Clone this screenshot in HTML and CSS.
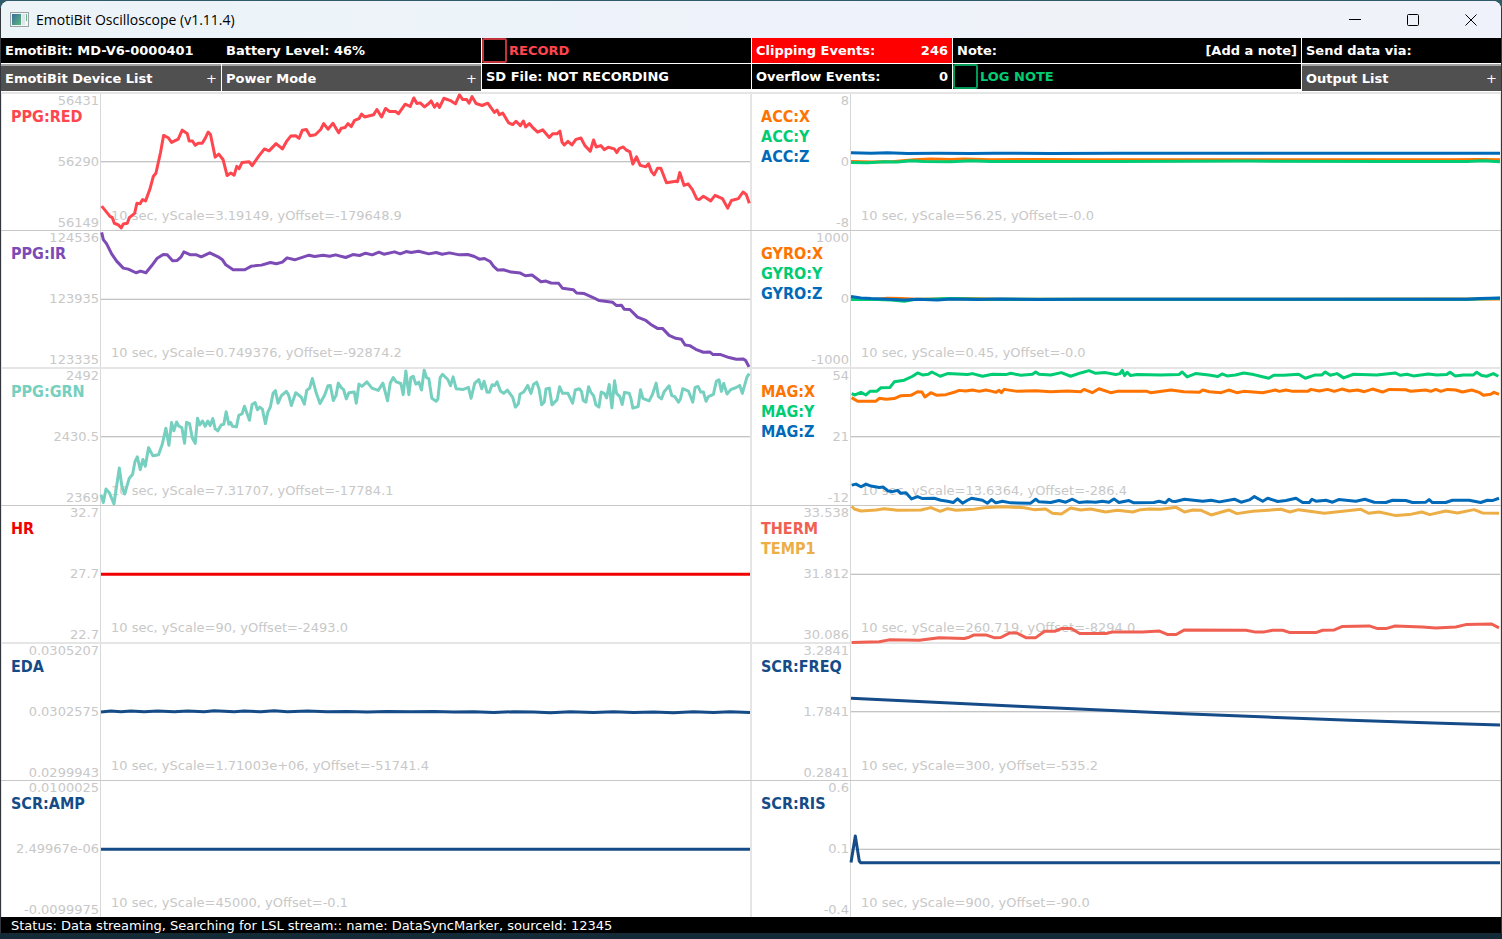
FILE: index.html
```
<!DOCTYPE html>
<html lang="en">
<head>
    <meta charset="UTF-8">
    <meta name="viewport" content="width=device-width, initial-scale=1.0">
    <title>EmotiBit Oscilloscope (v1.11.4)</title>
    <link rel="stylesheet" href="styles.css">
</head>
<body>
    <div class="window">
        <div class="titlebar">
            <svg class="app-icon" viewBox="0 0 19 15" aria-hidden="true">
                <defs>
                    <linearGradient id="icon-fill" x1="0" y1="0" x2="1" y2="1">
                        <stop offset="0" stop-color="#3a6ea0"/>
                        <stop offset="1" stop-color="#5cb87a"/>
                    </linearGradient>
                </defs>
                <rect x="0.5" y="0.5" width="18" height="14" fill="#f4f6f6" stroke="#9aa3a8"/>
                <rect x="2" y="2" width="9" height="11" fill="url(#icon-fill)"/>
                <rect x="12" y="2" width="3" height="11" fill="#dfe6e8"/>
                <rect x="16" y="2" width="1" height="7" fill="#69b58a"/>
            </svg>
            <h1 class="title">EmotiBit Oscilloscope (v1.11.4)</h1>
            <div class="window-controls">
                <button type="button" class="window-btn" aria-label="Minimize">
                    <svg viewBox="0 0 12 12"><path d="M0 5.5H12"/></svg>
                </button>
                <button type="button" class="window-btn" aria-label="Maximize">
                    <svg viewBox="0 0 12 12"><rect x="0.5" y="0.5" width="11" height="11" rx="1"/></svg>
                </button>
                <button type="button" class="window-btn" aria-label="Close">
                    <svg viewBox="0 0 12 12"><path d="M0.5 0.5L11.5 11.5M11.5 0.5L0.5 11.5"/></svg>
                </button>
            </div>
        </div>

        <!-- Device and recording controls -->
        <div class="toolbar">
            <div class="tool-group">
                <div class="tool-pair cell">
                    <span class="pair-text">EmotiBit: MD-V6-0000401</span>
                    <span class="pair-text">Battery Level: 46%</span>
                </div>
                <div class="tool-pair">
                    <button type="button" class="drop-btn"><span>EmotiBit Device List</span><span class="plus">+</span></button>
                    <button type="button" class="drop-btn"><span>Power Mode</span><span class="plus">+</span></button>
                </div>
            </div>
            <div class="tool-group">
                <label class="cell toggle record"><input type="checkbox">RECORD</label>
                <div class="cell">SD File: NOT RECORDING</div>
            </div>
            <div class="tool-group">
                <div class="cell alert"><span>Clipping Events:</span><span>246</span></div>
                <div class="cell"><span>Overflow Events:</span><span>0</span></div>
            </div>
            <div class="tool-group">
                <div class="cell"><span>Note:</span><button type="button" class="note-btn">[Add a note]</button></div>
                <label class="cell toggle log"><input type="checkbox">LOG NOTE</label>
            </div>
            <div class="tool-group">
                <div class="cell">Send data via:</div>
                <button type="button" class="drop-btn"><span>Output List</span><span class="plus">+</span></button>
            </div>
        </div>

        <!-- Signal plots -->
        <main class="plots">
            <section class="panel">
                <div class="axis">
                    <div class="names"><span class="ppg-red">PPG:RED</span></div>
                    <div class="ticks"><span>56431</span><span>56290</span><span>56149</span></div>
                </div>
                <div class="plot">
                    <p class="info">10 sec, yScale=3.19149, yOffset=-179648.9</p>
                    <svg class="trace" viewBox="0 0 1950 412" preserveAspectRatio="none">
                        <line class="zero" x1="0" y1="206" x2="1950" y2="206"/>
                        <polyline class="ppg-red" points="2,341 15,357 27,372 34,376 40,393 52,398 61,407 67,395 79,393 85,376 101,363 108,332 117,334 125,321 134,325 147,289 157,251 165,241 179,177 188,126 202,133 212,147 232,137 244,110 259,120 265,143 275,143 283,156 292,150 304,150 313,135 322,116 329,123 343,192 354,183 367,200 379,248 390,240 400,247 408,220 415,227 424,208 445,206 454,218 474,189 491,167 505,173 526,151 545,167 557,145 570,128 585,127 595,135 605,110 617,108 628,127 644,124 660,108 669,90 682,107 697,89 714,118 722,104 733,102 742,90 752,99 762,80 775,75 783,61 792,70 819,63 829,47 843,70 855,44 867,53 885,53 894,60 914,31 929,38 940,12 949,29 959,27 972,39 985,29 992,21 1002,40 1010,29 1017,41 1030,13 1052,21 1065,30 1077,3 1087,17 1099,17 1106,28 1115,8 1127,29 1145,35 1162,28 1182,56 1190,49 1197,63 1207,58 1225,88 1237,93 1247,83 1260,96 1269,82 1276,100 1287,90 1299,104 1312,116 1327,109 1347,132 1357,121 1370,121 1379,113 1385,146 1392,155 1403,144 1415,155 1427,138 1442,134 1454,157 1470,174 1480,140 1488,161 1502,157 1512,169 1524,162 1542,167 1550,178 1557,166 1569,161 1579,171 1589,175 1598,213 1609,191 1620,217 1637,221 1645,212 1654,236 1662,246 1672,226 1682,226 1699,270 1727,265 1732,267 1739,239 1752,278 1764,273 1777,291 1790,319 1797,321 1810,311 1832,325 1845,308 1867,318 1883,347 1894,324 1915,318 1929,298 1939,306 1948,332"/>
                    </svg>
                </div>
            </section>

            <section class="panel">
                <div class="axis">
                    <div class="names"><span class="axis-x">ACC:X</span><span class="axis-y">ACC:Y</span><span class="axis-z">ACC:Z</span></div>
                    <div class="ticks"><span>8</span><span>0</span><span>-8</span></div>
                </div>
                <div class="plot">
                    <p class="info">10 sec, yScale=56.25, yOffset=-0.0</p>
                    <svg class="trace" viewBox="0 0 1950 412" preserveAspectRatio="none">
                        <line class="zero" x1="0" y1="206" x2="1950" y2="206"/>
                        <polyline class="axis-x" points="0,205 60,207 130,205 190,200 240,198 300,199 340,198 420,200 560,199 700,200 900,200 1200,200 1500,200 1800,200 1890,199 1950,200"/>
                        <polyline class="axis-y" points="0,208 50,209 100,206 140,207 180,203 220,205 300,206 360,203 420,205 800,205 1200,204 1600,205 1850,205 1900,203 1950,206"/>
                        <polyline class="axis-z" points="0,179 60,180 110,179 170,181 260,180 360,181 430,180 600,181 800,180 1200,180 1600,180 1950,180"/>
                    </svg>
                </div>
            </section>

            <section class="panel">
                <div class="axis">
                    <div class="names"><span class="ppg-ir">PPG:IR</span></div>
                    <div class="ticks"><span>124536</span><span>123935</span><span>123335</span></div>
                </div>
                <div class="plot">
                    <p class="info">10 sec, yScale=0.749376, yOffset=-92874.2</p>
                    <svg class="trace" viewBox="0 0 1950 412" preserveAspectRatio="none">
                        <line class="zero" x1="0" y1="206" x2="1950" y2="206"/>
                        <polyline class="ppg-ir" points="2,4 7,26 17,39 32,69 47,91 67,112 82,115 105,126 119,121 135,126 152,105 169,82 187,71 199,72 215,90 229,89 240,79 249,63 269,72 287,72 301,78 327,66 352,78 365,87 375,102 397,117 432,117 452,106 482,103 509,95 527,99 545,94 559,81 582,87 625,73 642,77 667,73 687,76 705,72 735,80 757,71 777,74 795,67 815,72 835,64 850,70 882,63 899,69 917,62 932,65 954,61 985,69 1007,65 1025,70 1047,66 1077,72 1102,71 1122,77 1137,85 1152,83 1169,92 1179,106 1192,118 1209,117 1232,124 1260,127 1275,135 1295,133 1322,153 1337,151 1352,157 1375,158 1387,173 1419,177 1429,187 1452,189 1477,200 1497,210 1537,215 1549,225 1564,224 1572,236 1589,237 1612,260 1637,270 1652,282 1672,294 1687,294 1707,315 1727,324 1744,327 1755,344 1769,346 1787,357 1810,366 1829,365 1839,373 1862,373 1887,382 1909,387 1929,386 1937,391 1947,410"/>
                    </svg>
                </div>
            </section>

            <section class="panel">
                <div class="axis">
                    <div class="names"><span class="axis-x">GYRO:X</span><span class="axis-y">GYRO:Y</span><span class="axis-z">GYRO:Z</span></div>
                    <div class="ticks"><span>1000</span><span>0</span><span>-1000</span></div>
                </div>
                <div class="plot">
                    <p class="info">10 sec, yScale=0.45, yOffset=-0.0</p>
                    <svg class="trace" viewBox="0 0 1950 412" preserveAspectRatio="none">
                        <line class="zero" x1="0" y1="206" x2="1950" y2="206"/>
                        <polyline class="axis-x" points="0,206 70,207 110,203 150,204 200,206 260,205 340,204 450,206 1200,206 1950,205"/>
                        <polyline class="axis-y" points="0,207 60,206 120,208 160,212 190,207 240,206 290,204 400,206 1200,206 1860,206 1950,203"/>
                        <polyline class="axis-z" points="0,198 30,202 60,204 110,206 160,208 200,206 260,208 300,205 380,207 450,205 560,207 700,206 1200,206 1850,206 1890,204 1950,202"/>
                    </svg>
                </div>
            </section>

            <section class="panel">
                <div class="axis">
                    <div class="names"><span class="ppg-grn">PPG:GRN</span></div>
                    <div class="ticks"><span>2492</span><span>2430.5</span><span>2369</span></div>
                </div>
                <div class="plot">
                    <p class="info">10 sec, yScale=7.31707, yOffset=-17784.1</p>
                    <svg class="trace" viewBox="0 0 1950 412" preserveAspectRatio="none">
                        <line class="zero" x1="0" y1="206" x2="1950" y2="206"/>
                        <polyline class="ppg-grn" points="0,382 7,406 15,365 25,376 39,410 55,301 63,359 71,380 85,332 95,320 102,282 109,267 118,306 126,275 133,296 143,239 156,264 173,261 184,229 195,180 204,232 212,163 219,188 227,161 234,174 243,178 251,226 257,162 266,166 274,209 283,226 290,150 297,170 305,158 313,174 321,158 328,172 336,151 343,182 351,188 361,170 369,168 376,130 384,168 389,162 395,174 407,176 414,141 424,136 431,113 446,156 454,108 463,102 470,124 477,116 485,122 494,166 501,132 509,115 517,74 524,66 532,104 542,81 557,68 564,80 572,111 585,72 602,86 611,107 618,65 627,58 635,29 647,74 658,105 672,79 682,51 689,50 698,96 706,81 713,43 721,56 729,63 737,91 745,72 761,70 767,104 775,46 784,53 799,39 814,58 833,65 847,43 861,97 869,43 878,26 887,39 901,44 908,78 916,6 925,78 931,26 938,22 946,46 955,40 963,64 971,4 978,26 985,29 994,89 1007,98 1012,92 1019,26 1026,16 1042,32 1050,51 1058,24 1067,60 1089,62 1104,56 1112,89 1123,43 1135,32 1144,60 1151,37 1160,71 1167,71 1175,48 1183,50 1190,39 1200,67 1210,74 1221,64 1237,86 1245,116 1254,106 1259,76 1270,70 1282,50 1292,74 1300,46 1309,40 1316,60 1324,109 1332,100 1337,61 1347,58 1355,109 1370,94 1378,54 1387,74 1403,74 1417,104 1425,64 1437,60 1444,69 1449,96 1457,101 1465,54 1472,71 1480,81 1487,109 1496,116 1503,70 1512,74 1519,88 1527,47 1535,118 1543,36 1549,74 1559,84 1566,108 1573,71 1587,74 1592,89 1598,119 1614,114 1621,63 1628,89 1647,97 1657,77 1668,43 1675,84 1684,91 1692,69 1707,51 1715,81 1724,84 1735,101 1741,91 1748,60 1765,67 1778,101 1785,56 1794,53 1802,70 1810,70 1818,98 1825,84 1840,77 1849,37 1857,33 1864,68 1871,44 1881,76 1893,62 1907,57 1919,50 1927,74 1941,24 1948,14"/>
                    </svg>
                </div>
            </section>

            <section class="panel">
                <div class="axis">
                    <div class="names"><span class="axis-x">MAG:X</span><span class="axis-y">MAG:Y</span><span class="axis-z">MAG:Z</span></div>
                    <div class="ticks"><span>54</span><span>21</span><span>-12</span></div>
                </div>
                <div class="plot">
                    <p class="info">10 sec, yScale=13.6364, yOffset=-286.4</p>
                    <svg class="trace" viewBox="0 0 1950 412" preserveAspectRatio="none">
                        <line class="zero" x1="0" y1="206" x2="1950" y2="206"/>
                        <polyline class="axis-x" points="2,87 20,98 75,98 85,89 105,92 130,90 150,81 180,80 200,69 213,70 222,85 240,72 258,80 285,78 315,69 325,65 345,67 365,64 385,68 405,64 425,68 435,71 445,65 452,72 460,62 500,68 555,66 600,69 650,67 690,69 700,62 725,72 745,60 780,72 800,68 890,68 900,72 962,64 1000,69 1047,71 1057,64 1077,69 1112,72 1135,64 1159,72 1180,68 1237,72 1275,64 1287,68 1307,64 1327,68 1372,68 1382,62 1407,67 1432,62 1452,68 1475,61 1497,67 1522,64 1542,69 1567,61 1597,70 1617,62 1667,63 1682,68 1727,64 1742,68 1757,62 1772,68 1792,62 1817,64 1837,70 1865,64 1887,71 1900,80 1922,77 1932,71 1947,77"/>
                        <polyline class="axis-y" points="2,75 12,79 30,71 45,79 57,68 77,68 90,57 117,56 130,39 160,34 185,22 200,12 215,18 232,16 243,9 268,22 290,14 350,17 365,14 395,22 425,16 465,17 480,13 510,19 545,16 555,9 565,16 600,18 632,11 660,22 690,12 715,5 735,13 765,11 795,17 808,14 815,4 822,20 830,10 840,20 860,17 930,18 985,17 995,9 1010,24 1035,14 1075,18 1102,23 1115,15 1130,21 1155,18 1180,12 1210,17 1230,22 1255,28 1270,19 1300,19 1345,16 1365,28 1395,18 1415,18 1425,9 1440,19 1460,14 1480,27 1510,16 1580,18 1635,12 1650,19 1670,16 1690,21 1735,15 1760,18 1790,17 1800,10 1815,21 1840,18 1870,18 1880,10 1895,20 1910,22 1930,14 1945,22"/>
                        <polyline class="axis-z" points="2,353 15,350 30,358 45,350 60,356 85,360 97,359 110,370 125,373 140,369 150,378 165,376 182,395 200,388 215,394 250,393 270,399 290,402 307,406 320,395 335,408 350,399 362,393 395,399 410,408 422,397 435,407 455,402 480,407 540,408 555,396 565,404 600,406 625,400 645,405 665,396 685,406 710,404 735,405 755,402 775,405 790,395 805,406 835,400 850,407 910,406 925,402 945,407 955,396 965,402 975,403 1002,396 1057,402 1082,399 1107,404 1152,396 1172,405 1197,398 1212,388 1237,402 1252,393 1282,403 1307,400 1337,393 1357,406 1377,406 1385,396 1397,402 1427,399 1447,405 1465,397 1517,402 1544,396 1572,405 1607,406 1627,399 1667,400 1687,406 1727,405 1737,397 1747,406 1787,406 1807,399 1857,399 1892,406 1912,399 1927,400 1947,393"/>
                    </svg>
                </div>
            </section>

            <section class="panel">
                <div class="axis">
                    <div class="names"><span class="heart">HR</span></div>
                    <div class="ticks"><span>32.7</span><span>27.7</span><span>22.7</span></div>
                </div>
                <div class="plot">
                    <p class="info">10 sec, yScale=90, yOffset=-2493.0</p>
                    <svg class="trace" viewBox="0 0 1950 412" preserveAspectRatio="none">
                        <line class="zero" x1="0" y1="206" x2="1950" y2="206"/>
                        <polyline class="heart" points="0,206 1950,206"/>
                    </svg>
                </div>
            </section>

            <section class="panel">
                <div class="axis">
                    <div class="names"><span class="therm">THERM</span><span class="temp">TEMP1</span></div>
                    <div class="ticks"><span>33.538</span><span>31.812</span><span>30.086</span></div>
                </div>
                <div class="plot">
                    <p class="info">10 sec, yScale=260.719, yOffset=-8294.0</p>
                    <svg class="trace" viewBox="0 0 1950 412" preserveAspectRatio="none">
                        <line class="zero" x1="0" y1="206" x2="1950" y2="206"/>
                        <polyline class="therm" points="2,412 85,410 115,404 205,405 265,398 340,400 355,396 370,389 405,389 432,398 450,397 477,383 497,383 527,398 554,398 582,378 612,378 632,370 662,370 687,385 767,385 787,380 877,380 925,377 952,388 977,388 1002,374 1187,375 1212,380 1242,380 1267,375 1297,375 1319,382 1397,382 1417,375 1452,374 1475,364 1557,362 1582,370 1607,370 1635,362 1717,365 1757,368 1817,365 1847,358 1925,356 1947,368"/>
                        <polyline class="temp" points="2,1 10,9 30,15 75,12 100,8 140,13 210,12 240,5 268,16 290,8 315,13 370,10 400,5 455,2 520,5 550,11 585,9 605,22 632,24 660,6 690,12 720,9 765,18 800,13 847,18 870,11 897,9 932,10 977,4 1002,18 1027,12 1052,13 1082,27 1135,12 1159,23 1207,16 1292,10 1319,18 1345,11 1422,22 1532,10 1555,22 1587,18 1637,29 1677,26 1715,18 1739,26 1787,15 1822,21 1872,11 1897,21 1947,22"/>
                    </svg>
                </div>
            </section>

            <section class="panel">
                <div class="axis">
                    <div class="names"><span class="skin">EDA</span></div>
                    <div class="ticks"><span>0.0305207</span><span>0.0302575</span><span>0.0299943</span></div>
                </div>
                <div class="plot">
                    <p class="info">10 sec, yScale=1.71003e+06, yOffset=-51741.4</p>
                    <svg class="trace" viewBox="0 0 1950 412" preserveAspectRatio="none">
                        <line class="zero" x1="0" y1="206" x2="1950" y2="206"/>
                        <polyline class="skin" points="0,207 30,204 60,206 90,204 130,206 170,204 220,206 260,204 310,206 340,203 400,206 430,204 480,206 520,203 560,206 620,204 680,206 740,205 800,207 860,205 930,206 1000,205 1060,207 1120,206 1180,208 1240,206 1300,207 1350,209 1410,206 1480,208 1540,206 1600,208 1660,207 1720,209 1780,206 1840,208 1890,206 1950,208"/>
                    </svg>
                </div>
            </section>

            <section class="panel">
                <div class="axis">
                    <div class="names"><span class="skin">SCR:FREQ</span></div>
                    <div class="ticks"><span>3.2841</span><span>1.7841</span><span>0.2841</span></div>
                </div>
                <div class="plot">
                    <p class="info">10 sec, yScale=300, yOffset=-535.2</p>
                    <svg class="trace" viewBox="0 0 1950 412" preserveAspectRatio="none">
                        <line class="zero" x1="0" y1="206" x2="1950" y2="206"/>
                        <polyline class="skin" points="0,165 250,177 500,189 750,201 1000,212 1250,222 1500,232 1750,240 1950,246"/>
                    </svg>
                </div>
            </section>

            <section class="panel">
                <div class="axis">
                    <div class="names"><span class="skin">SCR:AMP</span></div>
                    <div class="ticks"><span>0.0100025</span><span>2.49967e-06</span><span>-0.0099975</span></div>
                </div>
                <div class="plot">
                    <p class="info">10 sec, yScale=45000, yOffset=-0.1</p>
                    <svg class="trace" viewBox="0 0 1950 412" preserveAspectRatio="none">
                        <line class="zero" x1="0" y1="206" x2="1950" y2="206"/>
                        <polyline class="skin" points="0,206 1950,206"/>
                    </svg>
                </div>
            </section>

            <section class="panel">
                <div class="axis">
                    <div class="names"><span class="skin">SCR:RIS</span></div>
                    <div class="ticks"><span>0.6</span><span>0.1</span><span>-0.4</span></div>
                </div>
                <div class="plot">
                    <p class="info">10 sec, yScale=900, yOffset=-90.0</p>
                    <svg class="trace" viewBox="0 0 1950 412" preserveAspectRatio="none">
                        <line class="zero" x1="0" y1="206" x2="1950" y2="206"/>
                        <polyline class="skin" points="0,246 13,166 25,242 30,247 1950,247"/>
                    </svg>
                </div>
            </section>
        </main>

        <footer class="status">Status: Data streaming, Searching for LSL stream:: name: DataSyncMarker, sourceId: 12345</footer>
    </div>
</body>
</html>
```
FILE: styles.css
```
* {
    margin: 0;
    padding: 0;
    box-sizing: border-box;
}

body {
    background: linear-gradient(to bottom, #2f5b68 0, #2f5b68 8px, #33363c 8px, #33363c 933px, #142a36 933px);
    padding: 1px 1px 6px;
    font-family: 'DejaVu Sans', Verdana, sans-serif;
    font-size: 13px;
}

button,
input {
    font: inherit;
    color: inherit;
    background: none;
    border: none;
    cursor: pointer;
}

.window {
    display: flex;
    flex-direction: column;
    min-height: calc(100vh - 7px);
    background: #fff;
    border-radius: 8px 8px 0 0;
    overflow: hidden;
}

/* Title bar */
.titlebar {
    display: flex;
    align-items: center;
    height: 37px;
    padding-left: 9px;
    background: linear-gradient(to right, #ecf4f8, #eef2fb 60%, #eff3f8 70%, #eff2fa);
}

.app-icon {
    width: 19px;
    height: 15px;
}

.title {
    flex: 1;
    padding-left: 7px;
    font-family: 'Open Sans', 'Segoe UI', sans-serif;
    font-size: 14px;
    font-weight: normal;
    color: #000;
}

.window-controls {
    display: flex;
    padding-right: 1px;
}

.window-btn {
    display: flex;
    align-items: center;
    justify-content: center;
    width: 58px;
    height: 36px;
}

.window-btn svg {
    width: 12px;
    height: 12px;
    fill: none;
    stroke: #000;
    overflow: visible;
}

/* Toolbar */
.toolbar {
    display: grid;
    grid-template-columns: 480fr 269fr 200fr 348fr 199fr;
    column-gap: 1px;
    height: 54px;
    font-size: 13px;
    font-weight: bold;
    color: #fff;
}

.tool-group {
    display: flex;
    flex-direction: column;
    gap: 1px;
}

.cell {
    display: flex;
    align-items: center;
    justify-content: space-between;
    height: 25px;
    padding: 0 4px;
    background: #000;
    white-space: nowrap;
}

.alert {
    background: #f00;
}

.tool-pair {
    display: grid;
    grid-template-columns: 220fr 259fr;
    column-gap: 1px;
}

.tool-pair.cell {
    padding: 0;
}

.pair-text {
    padding-left: 4px;
}

.drop-btn {
    display: flex;
    align-items: center;
    justify-content: space-between;
    height: 27px;
    padding: 0 4px;
    background: #505050;
    border-top: 2px solid #a4a4a4;
    white-space: nowrap;
}

.plus {
    font-weight: normal;
}

.toggle {
    justify-content: flex-start;
    gap: 2px;
    padding: 0;
    cursor: pointer;
}

.toggle input {
    appearance: none;
    width: 25px;
    height: 25px;
    border: 2px solid currentColor;
    border-radius: 2px;
    opacity: 0.75;
}

.toggle input:checked {
    background: currentColor;
}

.record {
    color: #ff454e;
}

.log {
    color: #00cc73;
}

/* Plots */
.plots {
    flex: 1;
    display: grid;
    grid-template-columns: 1fr 1fr;
    grid-auto-rows: 1fr;
}

.panel {
    display: grid;
    grid-template-columns: 100px 1fr;
    border-top: 1px solid #c8c8c8;
}

.panel:nth-child(4n+1),
.panel:nth-child(4n+2) {
    border-top: 2px solid #e5e5e5;
}

.axis {
    display: grid;
    border-left: 1px solid #e5e5e5;
    border-right: 1px solid #d8d8d8;
}

.names,
.ticks {
    grid-area: 1 / 1;
    display: flex;
    flex-direction: column;
}

.names {
    padding: 13px 0 0 9px;
    font-family: 'DejaVu Sans Condensed', Tahoma, sans-serif;
    font-size: 16px;
    font-weight: bold;
    line-height: 20px;
}

.ticks {
    justify-content: space-between;
    padding-right: 1px;
    line-height: 14px;
    text-align: right;
    color: #c8c8c8;
}

.plot {
    position: relative;
    display: flex;
    align-items: flex-end;
    border-right: 1px solid #e5e5e5;
}

.info {
    padding: 0 0 7px 10px;
    line-height: 14px;
    color: #c8c8c8;
}

.trace {
    position: absolute;
    inset: 0;
    width: 100%;
    height: 100%;
    fill: none;
    stroke: currentColor;
    stroke-width: 3px;
    stroke-linejoin: round;
    overflow: visible;
}

.trace polyline,
.trace line {
    vector-effect: non-scaling-stroke;
}

.zero {
    stroke: #b0b0b0;
    stroke-width: 1px;
    shape-rendering: crispEdges;
}

/* Signal colours, shared by the names and the traces */
.ppg-red { color: #ff454e; stroke: #ff454e; }
.ppg-ir { color: #7c4bb5; stroke: #7c4bb5; }
.ppg-grn { color: #76d0c0; stroke: #76d0c0; }
.heart { color: #f00000; stroke: #f00000; }
.skin { color: #154b87; stroke: #154b87; }
.axis-x { color: #ff7300; stroke: #ff7300; }
.axis-y { color: #00cc73; stroke: #00cc73; }
.axis-z { color: #006ab8; stroke: #006ab8; }
.therm { color: #f06052; stroke: #f06052; }
.temp { color: #ecae45; stroke: #ecae45; }

/* Status line */
.status {
    padding: 1px 0 0 10px;
    background: #000;
    color: #fff;
    line-height: 15px;
    white-space: nowrap;
}
```
